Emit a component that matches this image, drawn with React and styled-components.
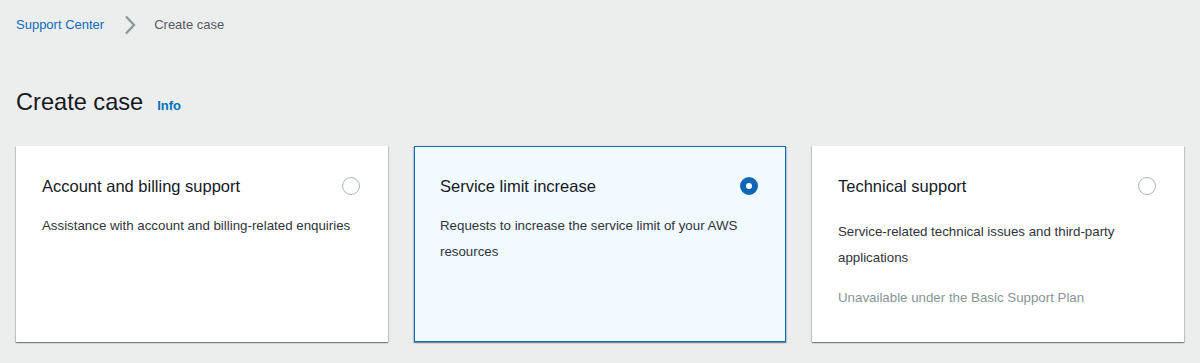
import React from 'react'
import styled, { createGlobalStyle } from 'styled-components'

const GlobalStyle = createGlobalStyle`
  html, body {
    margin: 0;
    padding: 0;
    background: #eceded;
  }
  body {
    font-family: "Liberation Sans", Arial, sans-serif;
    -webkit-font-smoothing: antialiased;
  }
`

const cases = [
  {
    title: 'Account and billing support',
    text: 'Assistance with account and billing-related enquiries',
    gap: 16,
  },
  {
    title: 'Service limit increase',
    text: 'Requests to increase the service limit of your AWS resources',
    selected: true,
    gap: 16,
  },
  {
    title: 'Technical support',
    text: 'Service-related technical issues and third-party applications',
    note: 'Unavailable under the Basic Support Plan',
    gap: 22,
  },
]

function App() {
  return (
    <Page>
      <GlobalStyle />
      <Breadcrumbs>
        <Crumb href="#">Support Center</Crumb>
        <Chevron width="12" height="20" viewBox="0 0 12 20">
          <path d="M2 1.5 L10 10 L2 18.5" fill="none" stroke="#8d9a9b" strokeWidth="2.4" />
        </Chevron>
        <Current>Create case</Current>
      </Breadcrumbs>
      <Heading>
        <Title>Create case</Title>
        <InfoLink href="#">Info</InfoLink>
      </Heading>
      <Tiles>
        {cases.map((c) => (
          <Tile key={c.title} $selected={c.selected}>
            <TileHead>
              <TileTitle>{c.title}</TileTitle>
              <Radio $selected={c.selected} />
            </TileHead>
            <TileText style={{ marginTop: c.gap }}>{c.text}</TileText>
            {c.note && <Note>{c.note}</Note>}
          </Tile>
        ))}
      </Tiles>
    </Page>
  )
}

export default App

const Page = styled.div`
  padding: 15px 16px 0 16px;
  width: 1200px;
  height: 363px;
  box-sizing: border-box;
`

const Breadcrumbs = styled.nav`
  display: flex;
  align-items: center;
  height: 20px;
  font-size: 13px;
  line-height: 20px;
`

const Crumb = styled.a`
  color: #0f6cbd;
  text-decoration: none;
`

const Chevron = styled.svg`
  margin: 0 18px 0 20px;
  display: block;
`

const Current = styled.span`
  color: #545b64;
`

const Heading = styled.div`
  display: flex;
  align-items: baseline;
  margin-top: 51px;
  height: 32px;
`

const Title = styled.h1`
  margin: 0;
  font-size: 23.6px;
  line-height: 32px;
  font-weight: normal;
  color: #16191f;
`

const InfoLink = styled.a`
  margin-left: 14px;
  font-size: 13px;
  font-weight: bold;
  color: #0073bb;
  text-decoration: none;
`

const Tiles = styled.div`
  display: grid;
  grid-template-columns: repeat(3, 372px);
  gap: 26px;
  margin-top: 28px;
`

const Tile = styled.div`
  box-sizing: border-box;
  height: 196px;
  padding: ${(p) => (p.$selected ? '28px 28px 0 25px' : '29px 29px 0 26px')};
  background: ${(p) => (p.$selected ? '#f1faff' : '#ffffff')};
  border: ${(p) => (p.$selected ? '1px solid #0f6cbd' : 'none')};
  box-shadow: 0 1px 1px 0 rgba(0, 28, 36, 0.3), 1px 1px 1px 0 rgba(0, 28, 36, 0.15),
    -1px 1px 1px 0 rgba(0, 28, 36, 0.15);
`

const TileHead = styled.div`
  display: flex;
  align-items: center;
  justify-content: space-between;
  height: 22px;
`

const TileTitle = styled.div`
  font-size: 16.5px;
  line-height: 22px;
  color: #16191f;
`

const Radio = styled.span`
  box-sizing: border-box;
  width: 18px;
  height: 18px;
  margin-right: -1px;
  border-radius: 50%;
  background: #ffffff;
  border: ${(p) => (p.$selected ? '6px solid #0f66b5' : '1.5px solid #aab7b8')};
`

const TileText = styled.div`
  font-size: 13.3px;
  line-height: 26px;
  color: #2f343a;
`

const Note = styled.div`
  margin-top: 14px;
  font-size: 13.3px;
  line-height: 26px;
  color: #879596;
`
